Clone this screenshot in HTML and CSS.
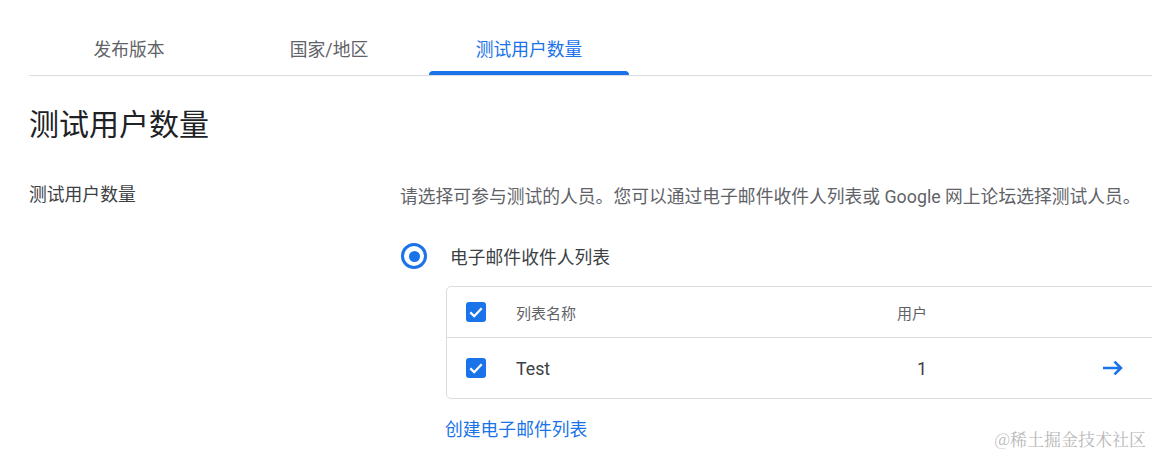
FILE: index.html
```html
<!DOCTYPE html>
<html>
  <head>
    <meta charset="UTF-8">
    <title>测试用户数量</title>
    <link rel="stylesheet" href="styles.css">
  </head>
  <body>
  <div class="tabs">
    <div class="tab"><span class="tab-label">发布版本</span><span class="bar"></span></div>
    <div class="tab"><span class="tab-label">国家/地区</span><span class="bar"></span></div>
    <div class="tab active"><span class="tab-label">测试用户数量</span><span class="bar"></span></div>
  </div>

  <h1 class="title">测试用户数量</h1>

  <div class="section">
    <div class="label">测试用户数量</div>
    <div class="content">
      <p class="desc">请选择可参与测试的人员。您可以通过电子邮件收件人列表或 Google 网上论坛选择测试人员。</p>

      <div class="radio-row">
        <span class="radio"><span class="dot"></span></span>
        <span class="radio-text">电子邮件收件人列表</span>
      </div>

      <div class="table">
        <div class="row head">
          <div class="c-check"><span class="check"><svg viewBox="0 0 20 20"><path d="M4.3 10.4l3.9 3.8 7.5-7.9" fill="none" stroke="#fff" stroke-width="2.3"/></svg></span></div>
          <div class="c-name">列表名称</div>
          <div class="c-users">用户</div>
          <div class="c-gap"></div>
          <div class="c-arrow"></div>
        </div>
        <div class="row body-row">
          <div class="c-check"><span class="check"><svg viewBox="0 0 20 20"><path d="M4.3 10.4l3.9 3.8 7.5-7.9" fill="none" stroke="#fff" stroke-width="2.3"/></svg></span></div>
          <div class="c-name">Test</div>
          <div class="c-users">1</div>
          <div class="c-gap"></div>
          <div class="c-arrow"><svg viewBox="0 0 24 24" width="24" height="24"><path d="M2 12h18.5M13.5 5.6L19.9 12l-6.4 6.4" fill="none" stroke="#1a73e8" stroke-width="2.7"/></svg></div>
        </div>
      </div>

      <a class="create" href="#">创建电子邮件列表</a>
    </div>
  </div>

  <div class="mark">@稀土掘金技术社区</div>
  </body>
</html>
```

FILE: styles.css
```css
body {
  margin: 0;
  background-color: #fff;
  font-family: Roboto, "Noto Sans CJK SC", sans-serif;
  color: #3c4043;
  overflow: hidden;
  height: 457px;
  position: relative;
}

.tabs {
  display: flex;
  margin-left: 29px;
  padding-top: 29px;
  border-bottom: 1px solid #dadce0;
}
.tab {
  width: 200px;
  display: flex;
  flex-direction: column;
  align-items: center;
}
.tab-label {
  line-height: 42px;
  font-size: 17.8px;
  color: #5f6368;
}
.bar {
  width: 100%;
  height: 4px;
  border-radius: 4px 4px 0 0;
}
.tab.active .tab-label { color: #1a73e8; }
.tab.active .bar { background-color: #1a73e8; }

.title {
  margin: 29px 0 0 29px;
  font-size: 30px;
  line-height: 40px;
  font-weight: normal;
  color: #202124;
}

.section {
  display: grid;
  grid-template-columns: 371px 1fr;
  margin: 38px 0 0 29px;
}
.label {
  font-size: 17.8px;
  line-height: 24px;
  color: #3c4043;
}
.content { padding-top: 2px; }
.desc {
  margin: 0;
  font-size: 17.8px;
  line-height: 24px;
  color: #5f6368;
  white-space: nowrap;
}

.radio-row {
  display: flex;
  align-items: center;
  height: 40px;
  margin-top: 27px;
}
.radio {
  width: 20px;
  height: 20px;
  border: 3px solid #1a73e8;
  border-radius: 50%;
  display: flex;
  align-items: center;
  justify-content: center;
  margin-left: 1px;
}
.dot {
  width: 11px;
  height: 11px;
  border-radius: 50%;
  background-color: #1a73e8;
}
.radio-text {
  margin-left: 23px;
  font-size: 17.8px;
  color: #3c4043;
}

.table {
  margin: 10px 0 0 46px;
  width: 720px;
  border: 1px solid #dadce0;
  border-radius: 5px;
}
.row {
  display: flex;
  align-items: center;
}
.row.head { height: 50px; }
.row.body-row {
  height: 60px;
  border-top: 1px solid #dadce0;
}
.c-check {
  width: 69px;
  padding-left: 19px;
  box-sizing: border-box;
  display: flex;
}
.check {
  width: 20px;
  height: 20px;
  border-radius: 3px;
  background-color: #1a73e8;
  display: flex;
}
.check svg { width: 20px; height: 20px; }
.c-name { width: 331px; }
.c-users { width: 80px; text-align: right; }
.c-gap { width: 174px; }
.c-arrow { width: 24px; display: flex; }

.head .c-name, .head .c-users {
  font-size: 15px;
  color: #5f6368;
}
.body-row .c-name, .body-row .c-users {
  font-size: 17.8px;
  color: #3c4043;
}

.create {
  display: block;
  margin: 19px 0 0 45px;
  font-size: 17.8px;
  line-height: 24px;
  color: #1a73e8;
  text-decoration: none;
}

.mark {
  position: absolute;
  right: 6px;
  bottom: 6px;
  font-family: "Noto Serif CJK SC", "Noto Sans CJK SC", serif;
  font-size: 17px;
  color: #b8b8b8;
}
```
